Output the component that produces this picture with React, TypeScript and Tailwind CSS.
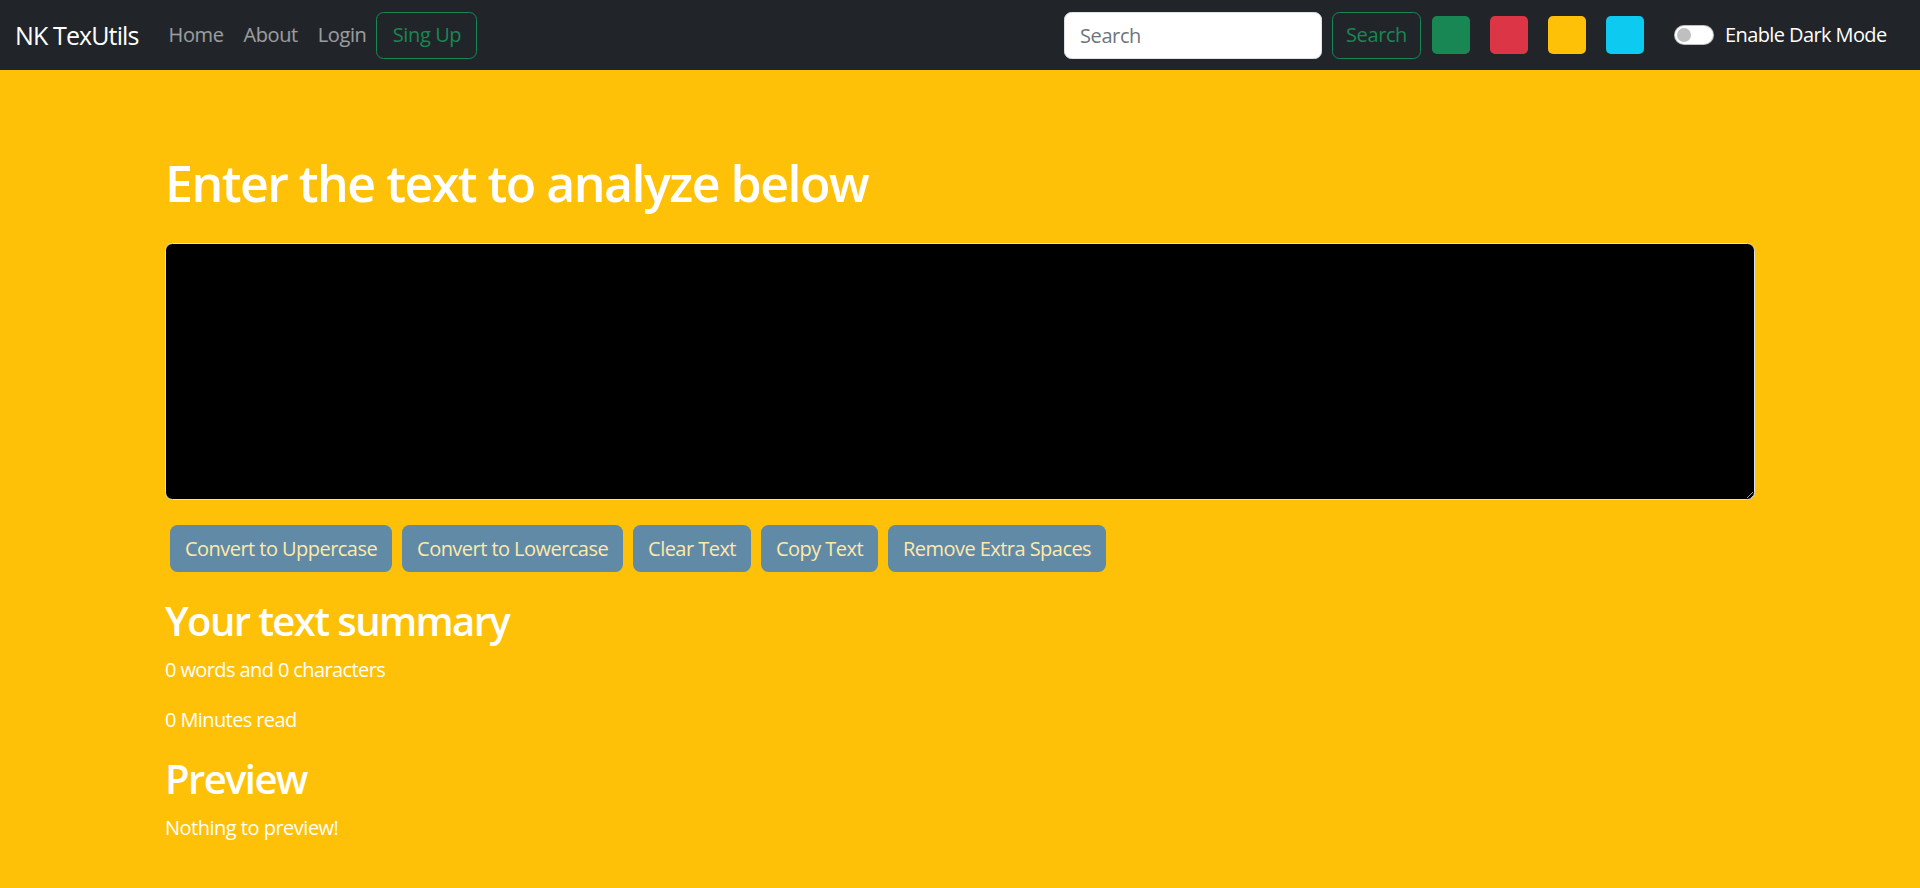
import React, { useState } from 'react';

const swatches = ['bg-[#198754]', 'bg-[#dc3545]', 'bg-[#ffc107]', 'bg-[#0dcaf0]'];

const actions = [
  'Convert to Uppercase',
  'Convert to Lowercase',
  'Clear Text',
  'Copy Text',
  'Remove Extra Spaces',
];

const Navbar: React.FC = () => (
  <nav className="h-[70px] bg-[#212529] flex items-center px-[15px]">
    <a className="text-[25px] leading-[37px] tracking-[-0.035em] text-white mr-[20px] whitespace-nowrap">NK TexUtils</a>
    <ul className="flex items-center">
      {['Home', 'About', 'Login'].map((l) => (
        <li key={l}>
          <a className="block px-[10px] text-[20px] leading-[30px] text-white/55">{l}</a>
        </li>
      ))}
      <li>
        <button className="h-[47px] w-[101px] rounded-[7.5px] border border-[#198754] text-[#198754] text-[20px]">
          Sing Up
        </button>
      </li>
    </ul>

    <div className="ml-auto flex items-center pr-[17px]">
      <input
        className="w-[258px] h-[47px] rounded-[7.5px] bg-white border border-[#dee2e6] px-[15px] text-[20px] placeholder:text-[#6c757d] outline-none"
        placeholder="Search"
      />
      <button className="ml-[10px] h-[47px] w-[89px] rounded-[7.5px] border border-[#198754] text-[#198754] text-[20px]">
        Search
      </button>
      <div className="flex items-center gap-[20px] ml-[11px]">
        {swatches.map((c) => (
          <div key={c} className={`w-[38px] h-[38px] rounded-[5px] ${c}`}></div>
        ))}
      </div>
      <div className="ml-[30px] w-[40px] h-[20px] rounded-full bg-white border border-black/25 flex items-center px-[2px]">
        <span className="w-[14px] h-[14px] rounded-full bg-[#bfbfbf]"></span>
      </div>
      <span className="ml-[11px] w-[163px] whitespace-nowrap text-[20px] tracking-[-0.03em] text-white">
        Enable Dark Mode
      </span>
    </div>
  </nav>
);

export default function App() {
  const [text, setText] = useState('');

  return (
    <div className="min-h-screen bg-[#ffc107] font-['Open_Sans',sans-serif] tracking-[-0.025em]">
      <Navbar />
      <main className="px-[165px] pt-[83px] pb-[40px] text-white">
        <h1 className="text-[50px] leading-[60px] font-semibold tracking-[-0.03em] mb-[30px]">
          Enter the text to analyze below
        </h1>
        <textarea
          value={text}
          onChange={(e) => setText(e.target.value)}
          rows={8}
          className="block w-full h-[257px] bg-black text-white border border-[#dee2e6] rounded-[7.5px] px-[15px] py-[7.5px] text-[20px] resize-y outline-none"
        />
        <div className="flex gap-[10px] mt-[25px] px-[5px]">
          {actions.map((a) => (
            <button
              key={a}
              disabled
              className="h-[47px] px-[15px] rounded-[7.5px] bg-[#0d6efd] text-white text-[20px] tracking-[-0.027em] opacity-[0.65] whitespace-nowrap"
            >
              {a}
            </button>
          ))}
        </div>

        <h2 className="mt-[25px] text-[40px] leading-[48px] font-semibold tracking-[-0.04em] mb-[10px]">
          Your text summary
        </h2>
        <p className="text-[20px] leading-[30px] tracking-[-0.03em] mb-[20px]">0 words and 0 characters</p>
        <p className="text-[20px] leading-[30px] tracking-[-0.03em] mb-[20px]">0 Minutes read</p>
        <h2 className="text-[40px] leading-[48px] font-semibold tracking-[-0.04em] mb-[10px]">Preview</h2>
        <p className="text-[20px] leading-[30px] tracking-[-0.025em]">Nothing to preview!</p>
      </main>
    </div>
  );
}
